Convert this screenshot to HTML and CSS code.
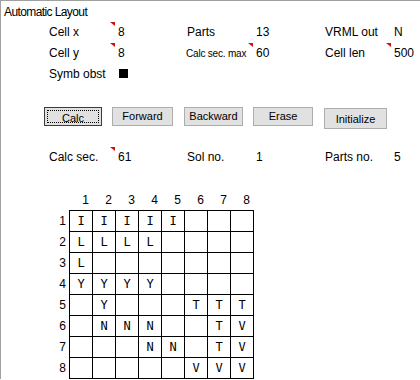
FILE: index.html
```html
<!DOCTYPE html>
<html>
<head>
<meta charset="utf-8">
<link rel="stylesheet" href="styles.css">
</head>
<body>
<div class="frame">
  <div class="title">Automatic Layout</div>

  <div class="params">
    <span class="lbl">Cell x</span><span class="val mark">8</span>
    <span class="lbl">Parts</span><span class="val">13</span>
    <span class="lbl">VRML out</span><span class="val">N</span>

    <span class="lbl">Cell y</span><span class="val mark">8</span>
    <span class="lbl small">Calc sec. max</span><span class="val mark">60</span>
    <span class="lbl">Cell len</span><span class="val mark">500</span>

    <span class="lbl">Symb obst</span><span class="val"><span class="sq"></span></span>
  </div>

  <div class="buttons">
    <button class="btn btn-calc"><span class="focus">Calc</span></button>
    <button class="btn btn-fwd">Forward</button>
    <button class="btn btn-back">Backward</button>
    <button class="btn btn-erase">Erase</button>
    <button class="btn btn-init">Initialize</button>
  </div>

  <div class="params stats">
    <span class="lbl">Calc sec.</span><span class="val mark">61</span>
    <span class="lbl">Sol no.</span><span class="val">1</span>
    <span class="lbl">Parts no.</span><span class="val">5</span>
  </div>

  <div class="board">
    <div class="heads">
      <span>1</span><span>2</span><span>3</span><span>4</span><span>5</span><span>6</span><span>7</span><span>8</span>
    </div>
    <div class="body">
      <div class="rlabels">
        <span>1</span><span>2</span><span>3</span><span>4</span><span>5</span><span>6</span><span>7</span><span>8</span>
      </div>
      <div class="cells">
        <div>I</div><div>I</div><div>I</div><div>I</div><div>I</div><div></div><div></div><div></div>
        <div>L</div><div>L</div><div>L</div><div>L</div><div></div><div></div><div></div><div></div>
        <div>L</div><div></div><div></div><div></div><div></div><div></div><div></div><div></div>
        <div>Y</div><div>Y</div><div>Y</div><div>Y</div><div></div><div></div><div></div><div></div>
        <div></div><div>Y</div><div></div><div></div><div></div><div>T</div><div>T</div><div>T</div>
        <div></div><div>N</div><div>N</div><div>N</div><div></div><div></div><div>T</div><div>V</div>
        <div></div><div></div><div></div><div>N</div><div>N</div><div></div><div>T</div><div>V</div>
        <div></div><div></div><div></div><div></div><div></div><div>V</div><div>V</div><div>V</div>
      </div>
    </div>
  </div>
</div>
</body>
</html>
```

FILE: styles.css
```css
html, body {
  margin: 0;
  padding: 0;
  background: #ffffff;
}

body {
  font-family: "Liberation Sans", Arial, sans-serif;
  font-size: 12px;
  color: #000;
  width: 420px;
  height: 380px;
  overflow: hidden;
}

.frame {
  border-top: 1px solid #a0a0a0;
  border-left: 1px solid #a0a0a0;
  height: 379px;
  box-sizing: border-box;
}

.title {
  padding: 2px 0 0 3px;
  line-height: 19px;
  letter-spacing: -0.6px;
}

.params {
  margin-left: 48px;
  display: grid;
  grid-template-columns: repeat(5, 69px) 24px;
  grid-auto-rows: 21px;
  line-height: 21px;
}

.lbl {
  white-space: nowrap;
}

.lbl.small {
  font-size: 10px;
  letter-spacing: -0.2px;
  margin-left: -1px;
}

.val {
  position: relative;
  white-space: nowrap;
}

.mark::before {
  content: "";
  position: absolute;
  left: -8px;
  top: 0;
  width: 0;
  height: 0;
  border-top: 4px solid #cc1111;
  border-left: 5px solid transparent;
}

.sq {
  display: inline-block;
  width: 9px;
  height: 9px;
  background: #000;
  margin-left: 1px;
}

.buttons {
  margin: 22px 0 0 43px;
  display: flex;
  align-items: flex-start;
  gap: 10px;
  height: 22px;
}

.btn {
  font-family: "Liberation Sans", Arial, sans-serif;
  font-size: 11px;
  color: #000;
  background: #e1e1e1;
  border: 1px solid #adadad;
  height: 19px;
  padding: 0;
  margin: 0;
  line-height: 17px;
  text-align: center;
  box-sizing: border-box;
}

.btn-calc {
  width: 58px;
  border-color: #3c3c3c;
  padding: 2px;
  line-height: 13px;
}

.btn-calc .focus {
  display: block;
  height: 13px;
  border: 1px dotted #000;
  box-sizing: border-box;
  line-height: 14px;
}

.btn-fwd { width: 61px; }
.btn-back { width: 59px; margin-left: 1px; }
.btn-erase { width: 60px; }
.btn-init {
  width: 63px;
  height: 21px;
  line-height: 20px;
  margin-left: 1px;
  margin-top: 1px;
}

.stats {
  margin-top: 18px;
}

.board {
  margin: 25px 0 0 48px;
}

.heads {
  display: grid;
  grid-template-columns: repeat(8, 23px);
  padding-left: 20px;
  height: 17px;
  line-height: 14px;
}

.heads span {
  text-align: right;
  padding-right: 3px;
}

.body {
  display: flex;
}

.rlabels {
  width: 20px;
  padding-top: 1px;
  display: flex;
  flex-direction: column;
}

.rlabels span {
  height: 21px;
  line-height: 21px;
  text-align: right;
  padding-right: 3px;
}

.cells {
  display: grid;
  grid-template-columns: repeat(8, 22px);
  grid-auto-rows: 20px;
  gap: 1px;
  padding: 1px;
  background: #000;
}

.cells div {
  background: #fff;
  font-family: "DejaVu Sans Mono", monospace;
  font-size: 12px;
  line-height: 20px;
  text-align: center;
}
```
